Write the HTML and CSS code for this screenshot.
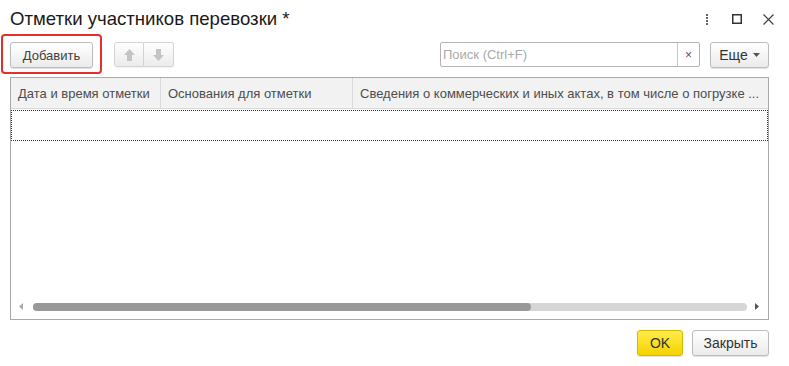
FILE: index.html
```html
<!DOCTYPE html>
<html lang="ru">
<head>
<meta charset="utf-8">
<link rel="stylesheet" href="styles.css">
</head>
<body>
<div class="window">
  <div class="titlebar">
    <div class="title">Отметки участников перевозки *</div>
    <div class="wincontrols">
      <svg class="ic-dots" width="4" height="11" viewBox="0 0 4 11"><rect x="1" y="0" width="2" height="2" fill="#666"/><rect x="1" y="3" width="2" height="2" fill="#666"/><rect x="1" y="6" width="2" height="2" fill="#666"/><rect x="1" y="9" width="2" height="2" fill="#666"/></svg>
      <svg class="ic-max" width="10" height="10" viewBox="0 0 10 10"><rect x="0.75" y="0.75" width="8.5" height="8.5" fill="none" stroke="#333" stroke-width="1.5"/></svg>
      <svg class="ic-close" width="11" height="11" viewBox="0 0 11 11"><path d="M0.5 0.5L10.5 10.5M10.5 0.5L0.5 10.5" stroke="#444" stroke-width="1.2"/></svg>
    </div>
  </div>
  <div class="toolbar">
    <div class="highlight"><button class="btn btn-add">Добавить</button></div>
    <div class="btngroup">
      <button class="btn btn-arrow"><svg width="11" height="12" viewBox="0 0 11 12"><path d="M5.5 0L11 6H8V12H3V6H0Z" fill="#c4c4c4"/></svg></button>
      <button class="btn btn-arrow"><svg width="11" height="12" viewBox="0 0 11 12"><path d="M5.5 12L11 6H8V0H3V6H0Z" fill="#c4c4c4"/></svg></button>
    </div>
    <div class="spacer"></div>
    <div class="search">
      <span class="placeholder">Поиск (Ctrl+F)</span>
      <span class="clear">×</span>
    </div>
    <button class="btn btn-more">Еще <svg width="7" height="4" viewBox="0 0 7 4"><path d="M0 0H7L3.5 4Z" fill="#555"/></svg></button>
  </div>
  <div class="table">
    <div class="thead">
      <div class="th c1">Дата и время отметки</div>
      <div class="th c2">Основания для отметки</div>
      <div class="th c3">Сведения о коммерческих и иных актах, в том числе о погрузке ...</div>
    </div>
    <div class="row"></div>
    <div class="tbody"></div>
    <div class="hscroll">
      <svg width="4" height="7" viewBox="0 0 4 7"><path d="M4 0V7L0 3.5Z" fill="#aaa"/></svg>
      <div class="track"><div class="thumb"></div></div>
      <svg width="4" height="7" viewBox="0 0 4 7"><path d="M0 0V7L4 3.5Z" fill="#555"/></svg>
    </div>
  </div>
  <div class="footer">
    <button class="btn btn-ok">OK</button>
    <button class="btn btn-close">Закрыть</button>
  </div>
</div>
</body>
</html>
```

FILE: styles.css
```css
* { box-sizing: border-box; }
html, body { margin: 0; padding: 0; background: #fff; }
body {
  font-family: Arial, "Liberation Sans", sans-serif;
  font-size: 13px;
  color: #4d4d4d;
  width: 789px;
  height: 366px;
  overflow: hidden;
}
.window { padding: 0 20px 0 10px; }
.titlebar {
  display: flex;
  align-items: center;
  height: 40px;
}
.title {
  font-size: 18.6px;
  color: #1a1a1a;
  flex: 1;
  margin-top: -2px;
}
.wincontrols {
  display: flex;
  align-items: center;
  margin-right: -5px;
  margin-top: -2px;
}
.ic-dots { margin-right: 23px; }
.ic-max { margin-right: 21px; }
.toolbar {
  display: flex;
  align-items: center;
  height: 28px;
  margin-top: 1px;
}
.btn {
  font-family: Arial, "Liberation Sans", sans-serif;
  font-size: 13px;
  color: #404040;
  background: linear-gradient(#ffffff, #ebebeb);
  border: 1px solid #bcbcbc;
  border-radius: 3px;
  box-shadow: 0 1px 1px rgba(0,0,0,0.12);
  padding: 0;
  display: inline-flex;
  align-items: center;
  justify-content: center;
  height: 26px;
}
.highlight { position: relative; }
.highlight::after {
  content: "";
  position: absolute;
  left: -9px; top: -8px; right: -9px; bottom: -6px;
  border: 2px solid #e2302a;
  border-radius: 4px;
}
.btn-add { width: 83px; }
.btngroup {
  display: flex;
  margin-left: 21px;
  height: 26px;
}
.btn-arrow {
  width: 30px;
  height: 25px;
  border-color: #d4d4d4;
  box-shadow: 0 1px 1px rgba(0,0,0,0.06);
}
.btn-arrow:first-child { border-radius: 3px 0 0 3px; }
.btn-arrow:last-child { border-radius: 0 3px 3px 0; border-left: none; }
.spacer { flex: 1; }
.search {
  width: 260px;
  height: 25px;
  border: 1px solid #b4b4b4;
  border-radius: 2px;
  display: flex;
  align-items: center;
  margin-top: -1px;
}
.placeholder {
  flex: 1;
  color: #aaa;
  padding-left: 2px;
}
.clear {
  width: 22px;
  height: 23px;
  border-left: 1px solid #c8c8c8;
  display: flex;
  align-items: center;
  justify-content: center;
  font-size: 12px;
  color: #555;
}
.btn-more {
  width: 59px;
  margin-left: 10px;
  font-size: 14px;
  gap: 5px;
  color: #333;
}
.table {
  margin-top: 8px;
  height: 243px;
  border: 1px solid #a9a9a9;
  display: flex;
  flex-direction: column;
}
.thead {
  display: flex;
  height: 31px;
  background: #f2f2f2;
  border-bottom: 1px solid #dcdcdc;
}
.th {
  display: flex;
  align-items: center;
  padding-left: 7px;
  white-space: nowrap;
  color: #4d4d4d;
  border-right: 1px solid #dadada;
}
.c1 { width: 150px; }
.c2 { width: 192px; }
.c3 { flex: 1; border-right: none; }
.row {
  height: 31px;
  border: 1px dotted #333;
  margin-top: 1px;
}
.tbody { flex: 1; }
.hscroll {
  display: flex;
  align-items: center;
  height: 22px;
  padding: 0 9px 3px 8px;
}
.track {
  flex: 1;
  height: 8px;
  background: #d6d6d6;
  border-radius: 4px;
  margin: 0 8px 0 10px;
  display: flex;
}
.thumb {
  width: 498px;
  height: 8px;
  background: #999;
  border-radius: 4px;
}
.footer {
  display: flex;
  justify-content: flex-end;
  gap: 9px;
  margin-top: 10px;
}
.btn-ok {
  width: 46px;
  height: 26px;
  background: linear-gradient(#ffec4a, #f5d300);
  border-color: #d4b800;
  color: #333;
  font-size: 14px;
}
.btn-close {
  width: 77px;
  font-size: 14px;
  color: #333;
}
```
